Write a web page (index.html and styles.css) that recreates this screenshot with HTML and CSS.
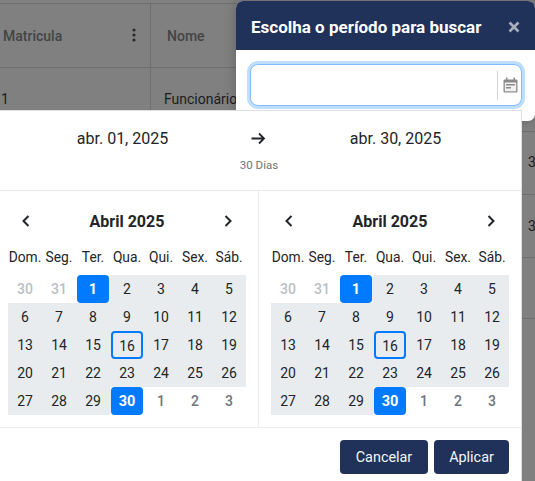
FILE: index.html
```html
<!DOCTYPE html>
<html lang="pt">
<head>
<meta charset="utf-8">
<title>Período</title>
<link rel="stylesheet" href="styles.css">
</head>
<body>
<div class="table">
  <div class="cell head c1">Matricula<svg class="kebab" width="4" height="14" viewBox="0 0 4 14"><circle cx="2" cy="2" r="1.6"/><circle cx="2" cy="7" r="1.6"/><circle cx="2" cy="12" r="1.6"/></svg></div>
  <div class="cell head c2">Nome</div>
  <div class="cell body c1">1</div>
  <div class="cell body c2">Funcionário</div>
</div>
<div class="stray s1">3</div>
<div class="stray s2">3</div>
<div class="hline l1"></div>
<div class="hline l2"></div>
<div class="hline l3"></div>
<div class="hline l4"></div>

<section class="modal">
  <header class="modal-head">
    <h1>Escolha o período para buscar</h1>
    <svg class="close" width="12" height="12" viewBox="0 0 12 12"><path d="M1.5 1.5l9 9M10.5 1.5l-9 9"/></svg>
  </header>
  <div class="modal-body">
    <div class="input">
      <span class="input-sep"></span>
      <svg class="cal" width="15" height="16" viewBox="0 0 15 16"><path class="cal-f" d="M3 0.5h1.5v2H10.500v-2H12v2h1.500a1 1 0 0 1 1 1V14.500a1 1 0 0 1-1 1h-12a1 1 0 0 1-1-1V3.500a1 1 0 0 1 1-1H3z"/><rect class="cal-w" x="1.800" y="5.500" width="11.400" height="8.800"/><rect class="cal-f" x="3" y="7" width="9" height="1.500"/><rect class="cal-f" x="3" y="10" width="5" height="1.500"/></svg>
    </div>
  </div>
</section>

<section class="picker">
  <div class="range">
    <span class="range-date from">abr. 01, 2025</span>
    <svg class="arrow" width="15" height="13" viewBox="0 0 15 13"><path d="M0.500 6.500H13M8 1.500l5 5-5 5"/></svg>
    <span class="range-date to">abr. 30, 2025</span>
    <span class="range-days">30 Dias</span>
  </div>
  <div class="months">
    <div class="month">
      <div class="month-head"><svg class="chev" width="10" height="14" viewBox="0 0 10 14"><path d="M7.500 2l-5 5 5 5"/></svg><strong>Abril 2025</strong><svg class="chev" width="10" height="14" viewBox="0 0 10 14"><path d="M2.500 2l5 5-5 5"/></svg></div>
      <div class="grid">
        <span class="wd">Dom.</span><span class="wd">Seg.</span><span class="wd">Ter.</span><span class="wd">Qua.</span><span class="wd">Qui.</span><span class="wd">Sex.</span><span class="wd">Sáb.</span>
        <span class="d off">30</span><span class="d off">31</span><span class="d sel start">1</span><span class="d in">2</span><span class="d in">3</span><span class="d in">4</span><span class="d in">5</span>
        <span class="d in">6</span><span class="d in">7</span><span class="d in">8</span><span class="d in">9</span><span class="d in">10</span><span class="d in">11</span><span class="d in">12</span>
        <span class="d in">13</span><span class="d in">14</span><span class="d in">15</span><span class="d in today">16</span><span class="d in">17</span><span class="d in">18</span><span class="d in">19</span>
        <span class="d in">20</span><span class="d in">21</span><span class="d in">22</span><span class="d in">23</span><span class="d in">24</span><span class="d in">25</span><span class="d in">26</span>
        <span class="d in">27</span><span class="d in">28</span><span class="d in">29</span><span class="d sel end">30</span><span class="d next">1</span><span class="d next">2</span><span class="d next">3</span>
      </div>
    </div>
    <div class="month">
      <div class="month-head"><svg class="chev" width="10" height="14" viewBox="0 0 10 14"><path d="M7.500 2l-5 5 5 5"/></svg><strong>Abril 2025</strong><svg class="chev" width="10" height="14" viewBox="0 0 10 14"><path d="M2.500 2l5 5-5 5"/></svg></div>
      <div class="grid">
        <span class="wd">Dom.</span><span class="wd">Seg.</span><span class="wd">Ter.</span><span class="wd">Qua.</span><span class="wd">Qui.</span><span class="wd">Sex.</span><span class="wd">Sáb.</span>
        <span class="d off">30</span><span class="d off">31</span><span class="d sel start">1</span><span class="d in">2</span><span class="d in">3</span><span class="d in">4</span><span class="d in">5</span>
        <span class="d in">6</span><span class="d in">7</span><span class="d in">8</span><span class="d in">9</span><span class="d in">10</span><span class="d in">11</span><span class="d in">12</span>
        <span class="d in">13</span><span class="d in">14</span><span class="d in">15</span><span class="d in today">16</span><span class="d in">17</span><span class="d in">18</span><span class="d in">19</span>
        <span class="d in">20</span><span class="d in">21</span><span class="d in">22</span><span class="d in">23</span><span class="d in">24</span><span class="d in">25</span><span class="d in">26</span>
        <span class="d in">27</span><span class="d in">28</span><span class="d in">29</span><span class="d sel end">30</span><span class="d next">1</span><span class="d next">2</span><span class="d next">3</span>
      </div>
    </div>
  </div>
  <footer class="actions">
    <button class="btn cancel">Cancelar</button>
    <button class="btn apply">Aplicar</button>
  </footer>
</section>
</body>
</html>
```

FILE: styles.css
```css
* { box-sizing: border-box; }
html, body { margin: 0; height: 100%; }
body {
  width: 535px; height: 481px; overflow: hidden; position: relative;
  background: #808080;
  font-family: Roboto, "Liberation Sans", sans-serif;
  color: #212529;
}
.table {
  display: grid; grid-template-columns: 151px 200px; grid-template-rows: 64px 60px;
  margin-top: 3px; border-top: 1px solid #6f6f6f;
}
.cell { display: flex; align-items: center; border-bottom: 1px solid #6f6f6f; }
.head { color: #444; font-weight: 500; font-size: 14px; }
.body { font-size: 14px; color: #1c1c1c; align-items: flex-start; padding-top: 23px; border-bottom: 0; }
.head.c1 { padding-left: 3px; padding-right: 14px; justify-content: space-between; border-right: 1px solid #6f6f6f; }
.head.c1 .kebab { margin-top: -2px; fill: #2a2a2a; }
.head.c2 { padding-left: 16px; }
.body.c1 { padding-left: 1px; border-right: 1px solid #6f6f6f; }
.body.c2 { padding-left: 13px; }
.stray { position: absolute; left: 528px; font-size: 14px; color: #1c1c1c; }
.s1 { top: 154px; }
.s2 { top: 218px; }
.hline { position: absolute; left: 521px; right: 0; height: 1px; background: #6f6f6f; }
.l1 { top: 131px; } .l2 { top: 194px; } .l3 { top: 257px; } .l4 { top: 318px; }

.modal {
  position: absolute; left: 236px; top: 1px; width: 299px; height: 120px;
  background: #fff; border-radius: 7px; overflow: hidden;
  box-shadow: 0 0 12px rgba(0,0,0,.25);
}
.modal-head {
  height: 49px; background: #20315a; display: flex; align-items: center; justify-content: space-between;
  padding: 3px 15px 0; color: #fff;
}
.modal-head h1 { margin: 0; font-size: 17px; font-weight: 700; line-height: 1; }
.close { stroke: #a6adbd; stroke-width: 2.600; fill: none; }
.modal-body { padding: 14px 13px 0 14px; }
.input {
  height: 42px; width: 272px; border: 1.500px solid #80bdff; border-radius: 8px;
  box-shadow: 0 0 0 3px #bfdeff; background: #fff;
  display: flex; align-items: center; justify-content: flex-end; padding-right: 3px; gap: 5px;
}
.input-sep { width: 1px; height: 29px; background: #ced4da; }
.cal-f { fill: #8a8a8a; }
.cal-w { fill: #f1f1f1; }

.picker {
  position: absolute; left: 0; top: 110px; width: 522px; height: 371px; background: #fff;
  border: 1px solid #dedede; border-left: 0; border-bottom: 0; display: flex; flex-direction: column;
}
.range {
  height: 80px; border-bottom: 1px solid #e9ecef; display: grid;
  grid-template-columns: 251px 15px 1fr; grid-template-rows: 18px auto; align-items: start; padding-top: 19px;
}
.range-date { font-size: 16px; text-align: center; line-height: 18px; white-space: nowrap; }
.from { padding-right: 6px; }
.to { padding-left: 4px; }
.arrow { stroke: #212529; stroke-width: 1.800; fill: none; margin-top: 2px; }
.range-days { grid-column: 1 / -1; text-align: center; font-size: 11.500px; color: #6c757d; margin-top: 10px; line-height: 14px; padding-right: 3px; }
.months { display: grid; grid-template-columns: 258px 1fr; height: 237px; border-bottom: 1px solid #e9ecef; }
.month { padding-left: 8px; }
.month + .month { border-left: 1px solid #e9ecef; padding-left: 12px; }
.month-head { height: 60px; width: 238px; display: flex; align-items: center; justify-content: space-between; padding: 0 13px; }
.month-head strong { font-size: 16px; font-weight: 700; }
.chev { stroke: #212529; stroke-width: 2; fill: none; }
.grid { display: grid; grid-template-columns: repeat(7, 34px); grid-template-rows: 24px; grid-auto-rows: 28px; width: 238px; }
.wd { font-size: 13.800px; display: flex; align-items: flex-start; justify-content: center; white-space: nowrap; line-height: 13px; }
.d { display: flex; align-items: center; justify-content: center; font-size: 14px; }
.off { color: #b9bfc6; font-weight: 500; }
.in { background: #e9ecef; }
.next { color: #6c757d; font-weight: 500; }
.sel { background: #007bff; color: #fff; font-weight: 700; font-size: 14.500px; border-radius: 4px; margin: 0 1px; }
.sel.start { box-shadow: 1px 0 0 #e9ecef; }
.sel.end { box-shadow: -1px 0 0 #e9ecef; }
.today { position: relative; padding-top: 2px; }
.today::after { content: ""; position: absolute; inset: 0 1px; border: 2px solid #007bff; border-radius: 4px; }
.actions { display: flex; justify-content: flex-end; gap: 6px; padding: 12px 12px 0 0; }
.btn {
  height: 34px; border: 0; border-radius: 4px; background: #20315a; color: #f4f5f8;
  font-family: Roboto, sans-serif; font-size: 14.400px; padding: 0;
}
.cancel { width: 88px; }
.apply { width: 75px; }
```
